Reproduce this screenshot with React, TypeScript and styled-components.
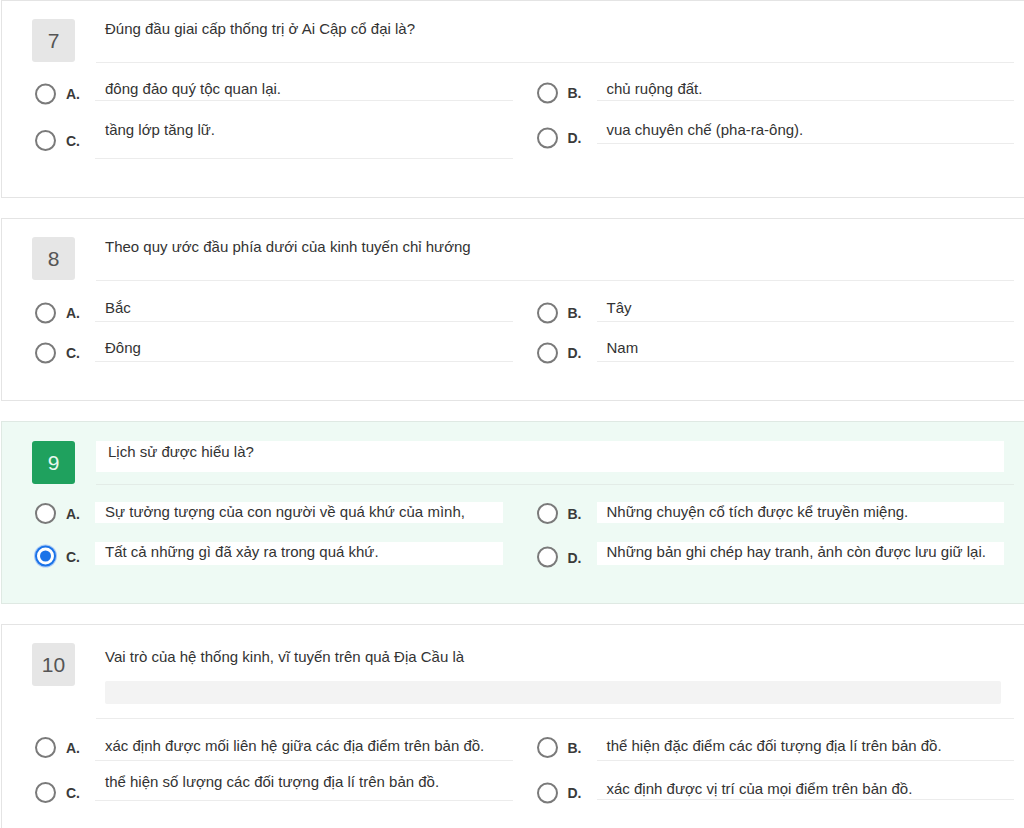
import React from "react";
import styled, { createGlobalStyle, css } from "styled-components";

const GlobalStyle = createGlobalStyle`
  *, *::before, *::after { box-sizing: border-box; }
  html, body { margin: 0; padding: 0; background: #ffffff; overflow: hidden; }
  body { font-family: "Liberation Sans", Arial, sans-serif; color: #333; }
`;

const Page = styled.div`
  width: 1040px;
  padding-left: 1px;
  display: flex;
  flex-direction: column;
  gap: 20px;
`;

const Card = styled.section<{ $active?: boolean; $padTop: number }>`
  border: 1px solid ${(p) => (p.$active ? "#dfe9e3" : "#e4e4e4")};
  background: ${(p) => (p.$active ? "#eefaf4" : "#ffffff")};
  padding: ${(p) => p.$padTop}px 25px 38px 30px;
`;

const Header = styled.div`
  display: flex;
  align-items: flex-start;
`;

const NumberBox = styled.div<{ $active?: boolean }>`
  flex: 0 0 43px;
  width: 43px;
  height: 43px;
  border-radius: 3px;
  display: flex;
  align-items: center;
  justify-content: center;
  font-size: 21px;
  background: ${(p) => (p.$active ? "#1fa15e" : "#e6e6e6")};
  color: ${(p) => (p.$active ? "#e8f8ee" : "#555")};
`;

const QuestionField = styled.div<{ $active?: boolean; $padTop: number }>`
  flex: 1;
  margin-left: 21px;
  min-height: 44px;
  padding-top: ${(p) => p.$padTop}px;
  border-bottom: 1px solid ${(p) => (p.$active ? "#e3ece7" : "#ececec")};
  font-size: 15px;
  line-height: 20px;
  color: #333;
`;

const QuestionText = styled.div<{ $indent: number }>`
  padding-left: ${(p) => p.$indent}px;
`;

const WhiteInput = styled.div`
  background: #ffffff;
  height: 31px;
  margin-right: 10px;
  padding-left: 12px;
  line-height: 22px;
`;

const GrayBar = styled.div`
  height: 23px;
  margin: 14px 13px 14px 9px;
  background: #f3f3f3;
  border-radius: 2px;
`;

const Options = styled.div<{ $top: number; $gap: number }>`
  display: grid;
  grid-template-columns: 1fr 1fr;
  column-gap: 21px;
  row-gap: ${(p) => p.$gap}px;
  align-items: start;
  margin-top: ${(p) => p.$top}px;
`;

const OptionRow = styled.label`
  display: flex;
  align-items: center;
`;

const Marker = styled.span<{ $dy: number }>`
  display: flex;
  align-items: center;
  transform: translateY(${(p) => p.$dy}px);
`;

const Radio = styled.span<{ $checked?: boolean }>`
  flex: 0 0 21px;
  width: 21px;
  height: 21px;
  margin-left: 3px;
  border-radius: 50%;
  background: #fff;
  border: 2px solid #7a7a7a;
  position: relative;
  ${(p) =>
    p.$checked &&
    css`
      border-color: #1a73e8;
      box-shadow: 0 0 0 1px #a9c9f5;
      &::after {
        content: "";
        position: absolute;
        left: 3px;
        top: 3px;
        width: 11px;
        height: 11px;
        border-radius: 50%;
        background: #1a73e8;
      }
    `}
`;

const Letter = styled.span`
  width: 29px;
  margin-left: 10px;
  font-size: 14px;
  font-weight: bold;
  color: #3a3a3a;
`;

const Field = styled.div<{ $h: number; $padTop: number; $white?: boolean }>`
  flex: 1;
  height: ${(p) => p.$h}px;
  padding: ${(p) => p.$padTop}px 10px 0 10px;
  font-size: 15px;
  line-height: 20px;
  color: #333;
  white-space: nowrap;
  ${(p) =>
    p.$white
      ? css`
          background: #ffffff;
          margin-right: 10px;
        `
      : css`
          border-bottom: 1px solid #ececec;
        `}
`;

type Opt = { letter: string; text: string; h: number; pad?: number; dy?: number; checked?: boolean };

type Q = {
  n: number;
  text: string;
  active?: boolean;
  padTop: number;
  optionsTop: number;
  rowGap: number;
  variant?: "white" | "bar";
  opts: Opt[];
};

const questions: Q[] = [
  {
    n: 7,
    text: "Đúng đầu giai cấp thống trị ở Ai Cập cổ đại là?",
    padTop: 18,
    optionsTop: 16,
    rowGap: 19,
    opts: [
      { letter: "A.", text: "đông đảo quý tộc quan lại.", h: 22, dy: 3.5 },
      { letter: "B.", text: "chủ ruộng đất.", h: 22, dy: 2.5 },
      { letter: "C.", text: "tầng lớp tăng lữ.", h: 39, dy: 1 },
      { letter: "D.", text: "vua chuyên chế (pha-ra-ông).", h: 24, dy: 5.5 },
    ],
  },
  {
    n: 8,
    text: "Theo quy ước đầu phía dưới của kinh tuyến chỉ hướng",
    padTop: 18,
    optionsTop: 17,
    rowGap: 16,
    opts: [
      { letter: "A.", text: "Bắc", h: 24, dy: 2.5 },
      { letter: "B.", text: "Tây", h: 24, dy: 2.5 },
      { letter: "C.", text: "Đông", h: 24, dy: 2.5 },
      { letter: "D.", text: "Nam", h: 24, dy: 2.5 },
    ],
  },
  {
    n: 9,
    text: "Lịch sử được hiểu là?",
    active: true,
    padTop: 19,
    optionsTop: 17,
    rowGap: 19,
    variant: "white",
    opts: [
      { letter: "A.", text: "Sự tưởng tượng của con người về quá khứ của mình,", h: 21, dy: 1 },
      { letter: "B.", text: "Những chuyện cổ tích được kể truyền miệng.", h: 21, dy: 1 },
      { letter: "C.", text: "Tất cả những gì đã xảy ra trong quá khứ.", h: 23, dy: 2.5, checked: true },
      { letter: "D.", text: "Những bản ghi chép hay tranh, ảnh còn được lưu giữ lại.", h: 23, dy: 3.5 },
    ],
  },
  {
    n: 10,
    text: "Vai trò của hệ thống kinh, vĩ tuyến trên quả Địa Cầu là",
    padTop: 18,
    optionsTop: 17,
    rowGap: 11,
    variant: "bar",
    opts: [
      { letter: "A.", text: "xác định được mối liên hệ giữa các địa điểm trên bản đồ.", h: 25, dy: -1 },
      { letter: "B.", text: "thể hiện đặc điểm các đối tượng địa lí trên bản đồ.", h: 25, dy: -1 },
      { letter: "C.", text: "thể hiện số lượng các đối tượng địa lí trên bản đồ.", h: 29, dy: 6 },
      { letter: "D.", text: "xác định được vị trí của mọi điểm trên bản đồ.", h: 28, pad: 7, dy: 6.5 },
    ],
  },
];

function QuestionCard({ q }: { q: Q }) {
  return (
    <Card $active={q.active} $padTop={q.padTop}>
      <Header>
        <NumberBox $active={q.active}>{q.n}</NumberBox>
        <QuestionField $active={q.active} $padTop={q.variant === "bar" ? 4 : 0}>
          {q.variant === "white" ? (
            <WhiteInput>{q.text}</WhiteInput>
          ) : (
            <QuestionText $indent={9}>{q.text}</QuestionText>
          )}
          {q.variant === "bar" && <GrayBar />}
        </QuestionField>
      </Header>
      <Options $top={q.optionsTop} $gap={q.rowGap}>
        {q.opts.map((o) => (
          <OptionRow key={o.letter}>
            <Marker $dy={o.dy ?? 2.5}>
              <Radio $checked={o.checked} />
              <Letter>{o.letter}</Letter>
            </Marker>
            <Field $h={o.h} $padTop={o.pad ?? 0} $white={q.variant === "white"}>
              {o.text}
            </Field>
          </OptionRow>
        ))}
      </Options>
    </Card>
  );
}

export default function App() {
  return (
    <>
      <GlobalStyle />
      <Page>
        {questions.map((q) => (
          <QuestionCard key={q.n} q={q} />
        ))}
      </Page>
    </>
  );
}
